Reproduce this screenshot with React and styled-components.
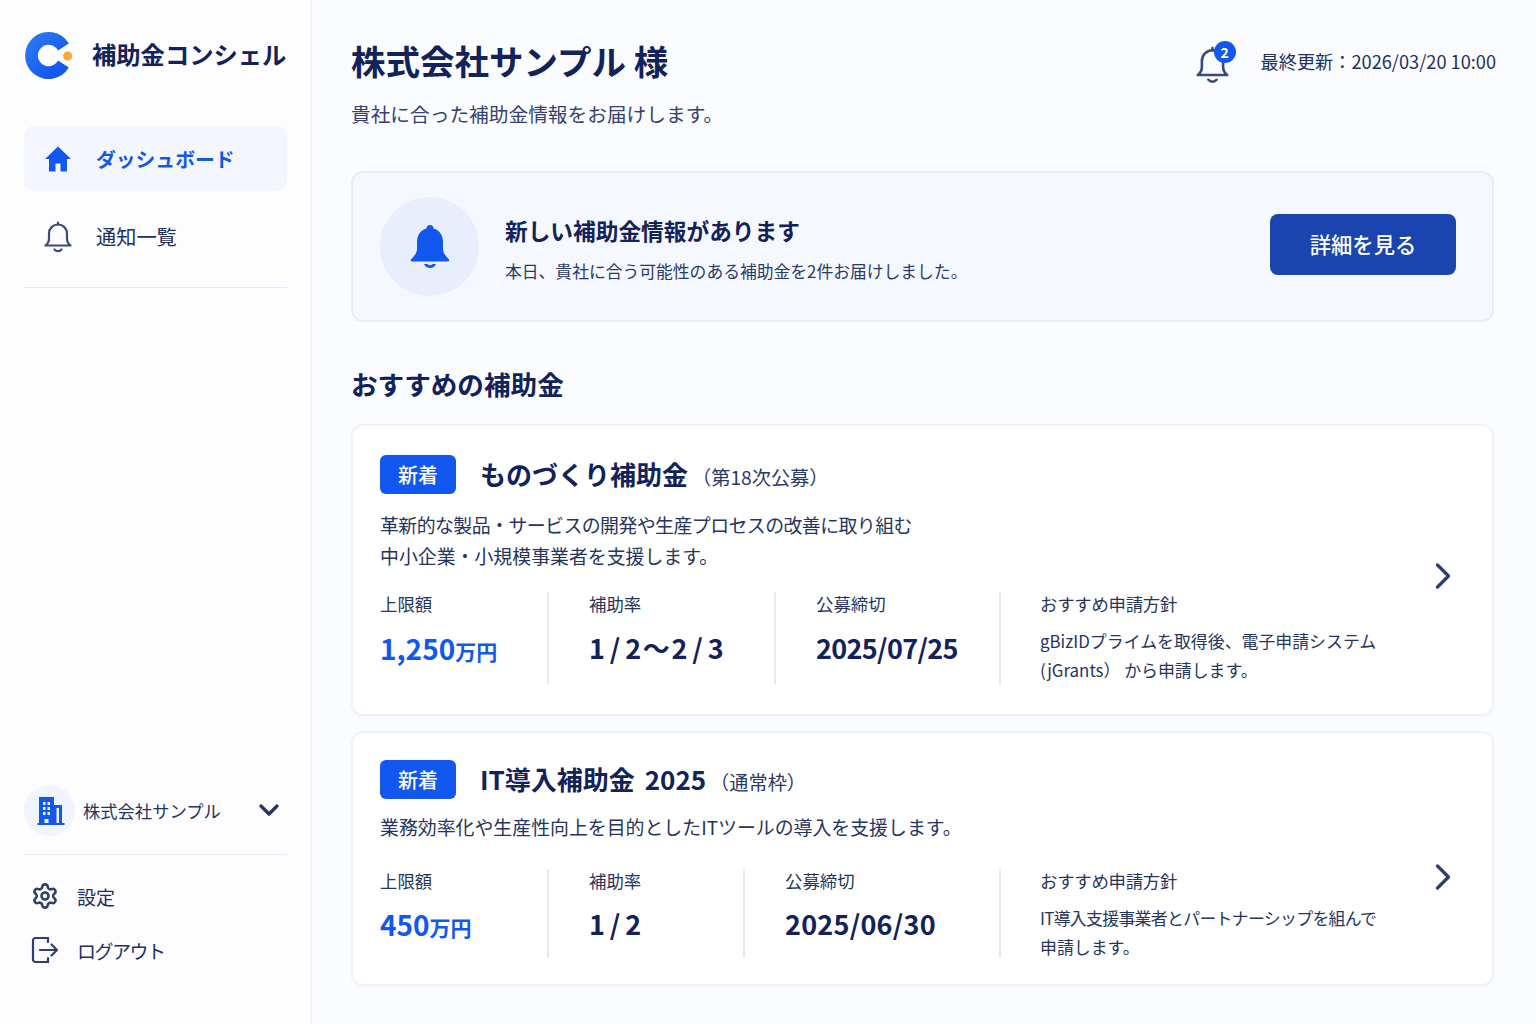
import React from 'react';
import styled, { createGlobalStyle } from 'styled-components';
import { Settings, ChevronDown, ChevronRight } from 'lucide-react';

const Global = createGlobalStyle`
  html, body { margin: 0; padding: 0; height: 100%; }
  body { background: #fbfcff; font-family: "Noto Sans CJK JP", "Noto Sans", sans-serif; color: #12225a; }
  * { box-sizing: border-box; }
`;

const Page = styled.div`
  display: flex;
  width: 1536px;
  height: 1024px;
  overflow: hidden;
`;

const Sidebar = styled.aside`
  width: 312px;
  flex: none;
  display: flex;
  flex-direction: column;
  padding: 31px 23px 0 24px;
  background: #fdfdff;
  border-right: 2px solid #f1f3fb;
`;

const Brand = styled.div`
  display: flex;
  align-items: center;
  gap: 18px;
  height: 50px;
`;

const BrandName = styled.div`
  margin-bottom: 6px;
  font-size: 24.3px;
  font-weight: 700;
  color: #12225a;
  white-space: nowrap;
`;

const Nav = styled.nav`
  display: flex;
  flex-direction: column;
  gap: 13px;
  margin-top: 45px;
  padding-bottom: 18px;
  border-bottom: 1px solid #e6e9f5;
`;

const NavItem = styled.div`
  display: flex;
  align-items: center;
  gap: 24px;
  height: 65px;
  width: 263px;
  padding-left: 20px;
  border-radius: 10px;
  font-size: ${p => (p.$active ? 19.8 : 20.2)}px;
  font-weight: ${p => (p.$active ? 700 : 400)};
  color: ${p => (p.$active ? '#1257f0' : '#1f2f63')};
  background: ${p => (p.$active ? '#f3f6fe' : 'transparent')};
`;

const SideFoot = styled.div`
  margin-top: auto;
  padding-bottom: 47px;
`;

const Company = styled.div`
  display: flex;
  align-items: center;
  gap: 8px;
  height: 51px;
  padding-bottom: 1px;
  font-size: 17.3px;
  color: #25355f;
  width: 263px;
`;

const CompanyIcon = styled.div`
  width: 51px;
  height: 51px;
  padding-left: 2px;
  border-radius: 50%;
  background: #f0f4fe;
  display: flex;
  align-items: center;
  justify-content: center;
  flex: none;
`;

const CompanyName = styled.div`
  flex: 1;
  white-space: nowrap;
`;

const Chevron = styled.div`
  display: flex;
  margin-right: 2px;
  color: #25355f;
`;

const FootDivider = styled.div`
  height: 1px;
  background: #e8ecf8;
  margin-top: 18px;
  margin-bottom: 14px;
`;

const FootItem = styled.div`
  display: flex;
  align-items: center;
  gap: 18px;
  height: 54px;
  padding-left: 7px;
  font-size: 19px;
  letter-spacing: ${p => (p.$tight ? '-1.5px' : '0')};
  color: #1f2f63;
`;

const Main = styled.main`
  flex: 1;
  min-width: 0;
  padding: 35px 42px 0 39px;
  display: flex;
  flex-direction: column;
`;

const Header = styled.header`
  display: flex;
  align-items: flex-start;
  justify-content: space-between;
`;

const TitleBlock = styled.div`
  display: flex;
  flex-direction: column;
`;

const Title = styled.h1`
  margin: 0;
  font-size: 34.5px;
  line-height: 50px;
  font-weight: 700;
  color: #12225a;
`;

const Subtitle = styled.p`
  margin: 15px 0 0;
  font-size: 19.7px;
  line-height: 28px;
  color: #33426e;
`;

const HeaderRight = styled.div`
  display: flex;
  align-items: center;
  gap: 31px;
  margin-right: -2px;
  padding-top: 5px;
`;

const BellWrap = styled.div`
  position: relative;
  width: 34px;
  height: 42px;
  display: flex;
  align-items: flex-end;
`;

const BellDrop = styled.div`
  display: flex;
  margin-bottom: -2px;
`;

const Badge = styled.span`
  position: absolute;
  top: 1px;
  right: -6px;
  width: 22px;
  height: 22px;
  border-radius: 50%;
  background: #1257f0;
  color: #fff;
  font-size: 14px;
  font-weight: 700;
  line-height: 22px;
  text-align: center;
`;

const Updated = styled.div`
  font-size: 18.2px;
  color: #1f2f63;
  white-space: nowrap;
`;

const Banner = styled.section`
  margin-top: 43px;
  height: 151px;
  display: flex;
  align-items: center;
  padding: 0 36px 0 27px;
  background: #f6f8ff;
  border: 2px solid #e8ecf8;
  border-radius: 12px;
`;

const BannerIcon = styled.div`
  width: 99px;
  height: 99px;
  flex: none;
  border-radius: 50%;
  background: #e8eefc;
  display: flex;
  align-items: center;
  justify-content: center;
`;

const BannerText = styled.div`
  flex: 1;
  margin-left: 26px;
  padding-top: 4px;
`;

const BannerTitle = styled.div`
  font-size: 22.7px;
  line-height: 34px;
  font-weight: 700;
  color: #12225a;
`;

const BannerSub = styled.div`
  margin-top: 10px;
  font-size: 16.8px;
  line-height: 26px;
  color: #2a3a68;
`;

const Button = styled.button`
  width: 186px;
  height: 61px;
  margin-bottom: 4px;
  padding: 0 0 2px;
  border: none;
  border-radius: 8px;
  background: #1a45ae;
  color: #fff;
  font-family: inherit;
  font-size: 21.3px;
  font-weight: 500;
`;

const SectionTitle = styled.h2`
  margin: 42px 0 0;
  font-size: 26.6px;
  line-height: 40px;
  font-weight: 700;
  color: #12225a;
`;

const Cards = styled.div`
  margin-top: 20px;
  display: flex;
  flex-direction: column;
  gap: 15px;
`;

const Card = styled.article`
  height: ${p => p.$h}px;
  padding: ${p => p.$pt}px 37px 0 27px;
  background: #fff;
  border: 2px solid #f0f2fa;
  border-radius: 12px;
  box-shadow: 0 1px 4px rgba(30, 50, 120, 0.03);
  display: flex;
  align-items: center;
`;

const CardBody = styled.div`
  flex: 1;
  align-self: flex-start;
  min-width: 0;
`;

const CardHead = styled.div`
  display: flex;
  align-items: center;
  height: 39px;
`;

const Tag = styled.span`
  width: 76px;
  height: 39px;
  flex: none;
  border-radius: 6px;
  background: #1257f0;
  color: #fff;
  font-size: 20px;
  font-weight: 500;
  line-height: 39px;
  text-align: center;
`;

const CardTitle = styled.h3`
  margin: 0 0 0 24px;
  padding-bottom: 2px;
  font-size: 26px;
  font-weight: 700;
  color: #12225a;
  line-height: 39px;
  white-space: nowrap;
  word-spacing: 4px;
`;

const CardNote = styled.span`
  margin-left: 4px;
  padding-top: 4px;
  font-size: 19.2px;
  color: #2a3a68;
  white-space: nowrap;
`;

const Desc = styled.p`
  margin: ${p => p.$top}px 0 0;
  font-size: 18.9px;
  line-height: 31px;
  color: #25355f;
`;

const DescTight = styled.span`
  letter-spacing: -0.55px;
`;

const Stats = styled.div`
  display: grid;
  grid-template-columns: ${p => p.$cols};
  margin-top: ${p => p.$top}px;
`;

const Stat = styled.div`
  padding-left: ${p => p.$pad}px;
  border-left: ${p => (p.$pad === 0 ? 'none' : '2px solid #e6e9f4')};
  height: ${p => p.$h}px;
`;

const StatLabel = styled.div`
  font-size: 17.4px;
  line-height: 24px;
  letter-spacing: ${p => (p.$tight ? '-0.25px' : '0')};
  color: #25355f;
`;

const StatValue = styled.div`
  margin-top: ${p => p.$top}px;
  font-size: ${p => (p.$accent ? 28 : 27)}px;
  line-height: 40px;
  font-weight: 700;
  letter-spacing: ${p => p.$spacing}px;
  word-spacing: -0.5px;
  color: ${p => (p.$accent ? '#1257f0' : '#12225a')};
  white-space: nowrap;
`;

const Unit = styled.span`
  font-size: 21px;
  letter-spacing: 0;
`;

const Wave = styled.span`
  margin: 0 2px;
`;

const StatNote = styled.div`
  margin-top: 10px;
  font-size: 16.9px;
  line-height: 29px;
  color: #25355f;
  white-space: nowrap;
`;

const NoteLine = styled.div`
  letter-spacing: ${p => (p.$tight ? '-0.7px' : '0')};
`;

const Arrow = styled.div`
  display: flex;
  color: #2d3e70;
  margin-right: -10px;
  margin-top: ${p => p.$top}px;
`;

const Logo = () => (
  <svg width="50" height="50" viewBox="0 0 50 50">
    <defs>
      <linearGradient id="lg" x1="0" y1="0" x2="1" y2="1">
        <stop offset="0" stopColor="#2f7df2" />
        <stop offset="1" stopColor="#0d4eef" />
      </linearGradient>
    </defs>
    <path d="M44.8 12.5A23.5 23.5 0 1 0 44.8 36.5L34 29.5A10.7 10.7 0 1 1 34 19.5Z" fill="url(#lg)" />
    <circle cx="43.7" cy="25" r="4.6" fill="#f9a93a" />
  </svg>
);

const HomeIcon = () => (
  <svg width="28" height="28" viewBox="0 0 28 28" fill="#1257f0">
    <path d="M14 1.5 1 14h4v12.5h6.5v-8h5v8H23V14h4Z" />
  </svg>
);

const BellOutline = ({ size = 28 }) => (
  <svg width={size} height={size * 33 / 28} viewBox="0 0 28 33" fill="none" stroke="#3d4a78" strokeWidth="2.2" strokeLinecap="round" strokeLinejoin="round">
    <path d="M14 4.5a9 9 0 0 0-9 9v5c0 3-1.5 5.5-3.5 7h25c-2-1.500-3.500-4-3.500-7v-5a9 9 0 0 0-9-9Z" />
    <path d="M14 4.500V2.500" />
    <path d="M10.500 29.500a4.500 4.500 0 0 0 7 0" />
  </svg>
);

const BellSolid = () => (
  <svg width="40" height="46" viewBox="0 0 40 46" fill="#1257f0">
    <circle cx="20" cy="4.500" r="3.500" />
    <path d="M20 4C11.500 4 7 10.500 7 18v7c0 4-3 7.500-6 10.500-.8 1 0 2 1 2h36c1 0 1.800-1 1-2-3-3-6-6.500-6-10.500v-7C33 10.500 28.500 4 20 4Z" />
    <path d="M14 40h3.500a3 3 0 0 0 5 0H26a6.500 6.500 0 0 1-12 0Z" />
  </svg>
);

const Building = () => (
  <svg width="28" height="29" viewBox="0 0 28 29">
    <path fillRule="evenodd" fill="#1257f0" d="M2 1h15v8h8v18h2.500v2H.5v-2H2ZM6 6v3h2.500V6Zm4.500 0v3H13V6ZM6 11v3h2.500v-3Zm4.500 0v3H13v-3ZM6 16v3h2.500v-3Zm4.500 0v3H13v-3ZM7.500 23v4h4v-4ZM19.500 12v15H22V12Z" />
  </svg>
);

const LogoutIcon = () => (
  <svg width="28" height="28" viewBox="0 0 28 28" fill="none" stroke="#2f3f6e" strokeWidth="2.200" strokeLinecap="round" strokeLinejoin="round">
    <path d="M17 2H4.500A2.500 2.500 0 0 0 2 4.500v19A2.500 2.500 0 0 0 4.500 26H17" />
    <path d="M17 2v4M17 22v4" />
    <path d="M9 14h17M20.500 8.500 26 14l-5.500 5.500" />
  </svg>
);

function StatRow({ cols, top, h, amount, rate, deadline, note, valueTop, dateSpacing }) {
  return (
    <Stats $cols={cols} $top={top}>
      <Stat $pad={0} $h={h}>
        <StatLabel>上限額</StatLabel>
        <StatValue $accent $top={valueTop} $spacing={0}>{amount}<Unit>万円</Unit></StatValue>
      </Stat>
      <Stat $pad={40} $h={h}>
        <StatLabel>補助率</StatLabel>
        <StatValue $top={valueTop} $spacing={-0.35}>{rate}</StatValue>
      </Stat>
      <Stat $pad={40} $h={h}>
        <StatLabel>公募締切</StatLabel>
        <StatValue $top={valueTop} $spacing={dateSpacing}>{deadline}</StatValue>
      </Stat>
      <Stat $pad={39} $h={h}>
        <StatLabel $tight>おすすめ申請方針</StatLabel>
        <StatNote>{note}</StatNote>
      </Stat>
    </Stats>
  );
}

export default function App() {
  return (
    <Page>
      <Global />
      <Sidebar>
        <Brand>
          <Logo />
          <BrandName>補助金コンシェル</BrandName>
        </Brand>
        <Nav>
          <NavItem $active><HomeIcon />ダッシュボード</NavItem>
          <NavItem><BellOutline />通知一覧</NavItem>
        </Nav>
        <SideFoot>
          <Company>
            <CompanyIcon><Building /></CompanyIcon>
            <CompanyName>株式会社サンプル</CompanyName>
            <Chevron><ChevronDown size={32} strokeWidth={2.5} /></Chevron>
          </Company>
          <FootDivider />
          <FootItem><Settings size={28} strokeWidth={2.2} color="#2f3f6e" />設定</FootItem>
          <FootItem $tight><LogoutIcon />ログアウト</FootItem>
        </SideFoot>
      </Sidebar>
      <Main>
        <Header>
          <TitleBlock>
            <Title>株式会社サンプル 様</Title>
            <Subtitle>貴社に合った補助金情報をお届けします。</Subtitle>
          </TitleBlock>
          <HeaderRight>
            <BellWrap>
              <BellDrop><BellOutline size={33} /></BellDrop>
              <Badge>2</Badge>
            </BellWrap>
            <Updated>最終更新：2026/03/20 10:00</Updated>
          </HeaderRight>
        </Header>
        <Banner>
          <BannerIcon><BellSolid /></BannerIcon>
          <BannerText>
            <BannerTitle>新しい補助金情報があります</BannerTitle>
            <BannerSub>本日、貴社に合う可能性のある補助金を2件お届けしました。</BannerSub>
          </BannerText>
          <Button>詳細を見る</Button>
        </Banner>
        <SectionTitle>おすすめの補助金</SectionTitle>
        <Cards>
          <Card $h={292} $pt={29}>
            <CardBody>
              <CardHead>
                <Tag>新着</Tag>
                <CardTitle>ものづくり補助金</CardTitle>
                <CardNote>（第18次公募）</CardNote>
              </CardHead>
              <Desc $top={15}><DescTight>革新的な製品・サービスの開発や生産プロセスの改善に取り組む</DescTight><br />中小企業・小規模事業者を支援します。</Desc>
              <StatRow
                cols="167px 227px 225px 1fr"
                top={21}
                h={92}
                amount="1,250"
                rate={<>1 / 2<Wave>～</Wave>2 / 3</>}
                deadline="2025/07/25"
                valueTop={12}
                dateSpacing={-0.65}
                note={<>
                  <NoteLine>gBizIDプライムを取得後、電子申請システム</NoteLine>
                  <NoteLine>(jGrants） から申請します。</NoteLine>
                </>}
              />
            </CardBody>
            <Arrow $top={-18}><ChevronRight size={44} strokeWidth={1.8} /></Arrow>
          </Card>
          <Card $h={255} $pt={27}>
            <CardBody>
              <CardHead>
                <Tag>新着</Tag>
                <CardTitle>IT導入補助金 2025</CardTitle>
                <CardNote>（通常枠）</CardNote>
              </CardHead>
              <Desc $top={12}>業務効率化や生産性向上を目的としたITツールの導入を支援します。</Desc>
              <StatRow
                cols="167px 196px 256px 1fr"
                top={27}
                h={89}
                amount="450"
                rate="1 / 2"
                deadline="2025/06/30"
                valueTop={11}
                dateSpacing={0.25}
                note={<>
                  <NoteLine $tight>IT導入支援事業者とパートナーシップを組んで</NoteLine>
                  <NoteLine>申請します。</NoteLine>
                </>}
              />
            </CardBody>
            <Arrow $top={10}><ChevronRight size={44} strokeWidth={1.8} /></Arrow>
          </Card>
        </Cards>
      </Main>
    </Page>
  );
}
